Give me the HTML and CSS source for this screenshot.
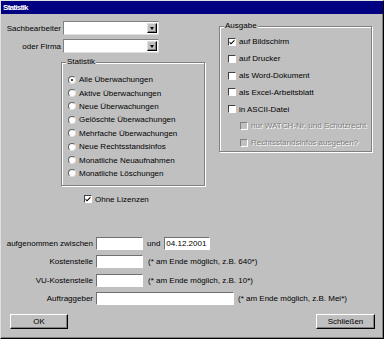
FILE: index.html
```html
<!DOCTYPE html>
<html lang="de">
<head>
<meta charset="utf-8">
<title>Statistik</title>
<link rel="stylesheet" href="styles.css">
</head>
<body>
<div class="window">
  <div class="titlebar">Statistik</div>
  <div class="top">
    <div class="left">
      <div class="field-row first">
        <span class="label">Sachbearbeiter</span>
        <div class="combo"><div class="combo-btn"><span class="arrow"></span></div></div>
      </div>
      <div class="field-row">
        <span class="label">oder Firma</span>
        <div class="combo"><div class="combo-btn"><span class="arrow"></span></div></div>
      </div>
      <div class="group stat">
        <span class="group-title">Statistik</span>
        <div class="radio-row"><span class="radio checked"></span>Alle Überwachungen</div>
        <div class="radio-row"><span class="radio"></span>Aktive Überwachungen</div>
        <div class="radio-row"><span class="radio"></span>Neue Überwachungen</div>
        <div class="radio-row"><span class="radio"></span>Gelöschte Überwachungen</div>
        <div class="radio-row"><span class="radio"></span>Mehrfache Überwachungen</div>
        <div class="radio-row"><span class="radio"></span>Neue Rechtsstandsinfos</div>
        <div class="radio-row"><span class="radio"></span>Monatliche Neuaufnahmen</div>
        <div class="radio-row"><span class="radio"></span>Monatliche Löschungen</div>
      </div>
      <div class="check-row lizenz"><span class="check"><svg viewBox="0 0 6 6" width="6" height="6"><path d="M0.5 2.5 L2 4 L5.5 0.5 L5.5 2 L2 5.5 L0.5 4 Z" fill="#000"/></svg></span>Ohne Lizenzen</div>
    </div>
    <div class="group ausgabe">
      <span class="group-title">Ausgabe</span>
      <div class="check-row"><span class="check"><svg viewBox="0 0 6 6" width="6" height="6"><path d="M0.5 2.5 L2 4 L5.5 0.5 L5.5 2 L2 5.5 L0.5 4 Z" fill="#000"/></svg></span>auf Bildschirm</div>
      <div class="check-row"><span class="check"></span>auf Drucker</div>
      <div class="check-row"><span class="check"></span>als Word-Dokument</div>
      <div class="check-row"><span class="check"></span>als Excel-Arbeitsblatt</div>
      <div class="check-row"><span class="check"></span>in ASCII-Datei</div>
      <div class="check-row sub disabled"><span class="check"></span>nur WATCH-Nr. und Schutzrecht</div>
      <div class="check-row sub disabled"><span class="check"></span>Rechtsstandsinfos ausgeben?</div>
    </div>
  </div>
  <div class="form">
    <div class="form-row">
      <span class="form-label">aufgenommen zwischen</span>
      <div class="input short"></div>
      <span class="und">und</span>
      <div class="input date">04.12.2001</div>
    </div>
    <div class="form-row">
      <span class="form-label">Kostenstelle</span>
      <div class="input short"></div>
      <span class="note">(* am Ende möglich, z.B. 640*)</span>
    </div>
    <div class="form-row">
      <span class="form-label">VU-Kostenstelle</span>
      <div class="input short"></div>
      <span class="note">(* am Ende möglich, z.B. 10*)</span>
    </div>
    <div class="form-row">
      <span class="form-label">Auftraggeber</span>
      <div class="input long"></div>
      <span class="note long-note">(* am Ende möglich, z.B. Mei*)</span>
    </div>
  </div>
  <div class="buttons">
    <div class="btn">OK</div>
    <div class="btn wide">Schließen</div>
  </div>
</div>
</body>
</html>
```

FILE: styles.css
```css
* { box-sizing: border-box; }
html, body { margin: 0; padding: 0; background: #c0c0c0; }
body {
  font-family: "Liberation Sans", Arial, sans-serif;
  font-size: 8px;
  color: #000;
}
.window {
  width: 384px;
  height: 339px;
  border: 1px solid;
  border-color: #dfdfdf #000 #000 #dfdfdf;
  box-shadow: inset -1px -1px 0 #808080;
  background: #c0c0c0;
  display: flex;
  flex-direction: column;
}
.titlebar {
  height: 13px;
  background: #000080;
  color: #fff;
  font-weight: bold;
  font-size: 8px;
  letter-spacing: -0.7px;
  line-height: 13px;
  padding-left: 2px;
}
.top { display: flex; align-items: flex-start; }
.left {
  width: 205px;
  display: flex;
  flex-direction: column;
  align-items: flex-start;
}
.field-row { display: flex; align-items: center; height: 14px; margin-top: 4px; }
.field-row.first { margin-top: 7px; }
.label { width: 60px; text-align: right; margin-right: 2px; white-space: nowrap; }
.combo {
  width: 96px;
  height: 14px;
  background: #fff;
  border: 1px solid;
  border-color: #808080 #dfdfdf #dfdfdf #808080;
  display: flex;
  justify-content: flex-end;
  padding: 1px;
}
.combo-btn {
  width: 10px;
  height: 10px;
  background: #c0c0c0;
  border: 1px solid;
  border-color: #dfdfdf #000 #000 #dfdfdf;
  box-shadow: inset -1px -1px 0 #808080;
  display: flex;
  align-items: center;
  justify-content: center;
}
.arrow {
  width: 0; height: 0;
  border-left: 2.5px solid transparent;
  border-right: 2.5px solid transparent;
  border-top: 3px solid #000;
  margin-top: 1px;
}
.group {
  position: relative;
  border: 1px solid #808080;
  box-shadow: 1px 1px 0 #fff, inset 1px 1px 0 #fff;
}
.group-title {
  position: absolute;
  top: -6px;
  left: 4px;
  padding: 0 1px;
  background: #c0c0c0;
  line-height: 10px;
  white-space: nowrap;
}
.stat {
  margin-left: 60px;
  margin-top: 9px;
  width: 144px;
  height: 124px;
  padding: 10px 0 0 6px;
}
.radio-row {
  display: flex;
  align-items: center;
  height: 13.4px;
  white-space: nowrap;
}
.radio {
  position: relative;
  flex: none;
  width: 8px;
  height: 8px;
  border-radius: 50%;
  background: #fff;
  border: 1px solid;
  border-color: #606060 #e0e0e0 #e0e0e0 #606060;
  margin-right: 3px;
}
.radio.checked::after {
  content: "";
  position: absolute;
  left: 2px;
  top: 2px;
  width: 2px;
  height: 2px;
  border-radius: 50%;
  background: #000;
}
.check-row {
  display: flex;
  align-items: center;
  height: 16.8px;
  white-space: nowrap;
}
.check {
  flex: none;
  width: 8px;
  height: 8px;
  background: #fff;
  border: 1px solid;
  border-color: #404040 #fff #fff #404040;
  margin-right: 3px;
  display: flex;
  align-items: center;
  justify-content: center;
}
.check svg { display: block; }
.lizenz { margin-left: 83px; margin-top: 6px; height: 14px; }
.ausgabe {
  margin-left: 13px;
  margin-top: 12px;
  width: 153px;
  height: 126px;
  padding: 6.6px 0 0 8px;
}
.check-row.sub { padding-left: 12px; }
.disabled { color: #808080; text-shadow: 1px 1px 0 #fff; }
.disabled .check { background: #c0c0c0; border-color: #808080 #fff #fff #808080; }
.form {
  margin-top: 31px;
  display: flex;
  flex-direction: column;
  gap: 5.3px;
}
.form-row { display: flex; align-items: center; height: 13px; white-space: nowrap; }
.form-label { width: 92px; text-align: right; margin-right: 3px; }
.input {
  height: 13px;
  background: #fff;
  border: 1px solid;
  border-color: #707070 #fff #fff #707070;
  padding-left: 1px;
  line-height: 11px;
}
.input.short { width: 47px; }
.input.date { width: 46px; }
.input.long { width: 138px; }
.und { margin-left: 4px; margin-right: 4px; }
.note { margin-left: 5px; }
.note.long-note { margin-left: 4px; }
.buttons {
  margin-top: 9px;
  display: flex;
  justify-content: space-between;
  padding: 0 8px 0 9px;
}
.btn {
  width: 58px;
  height: 15px;
  border: 1px solid;
  border-color: #fff #000 #000 #fff;
  box-shadow: inset -1px -1px 0 #808080;
  display: flex;
  align-items: center;
  justify-content: center;
}
.btn.wide { width: 59px; }
```
